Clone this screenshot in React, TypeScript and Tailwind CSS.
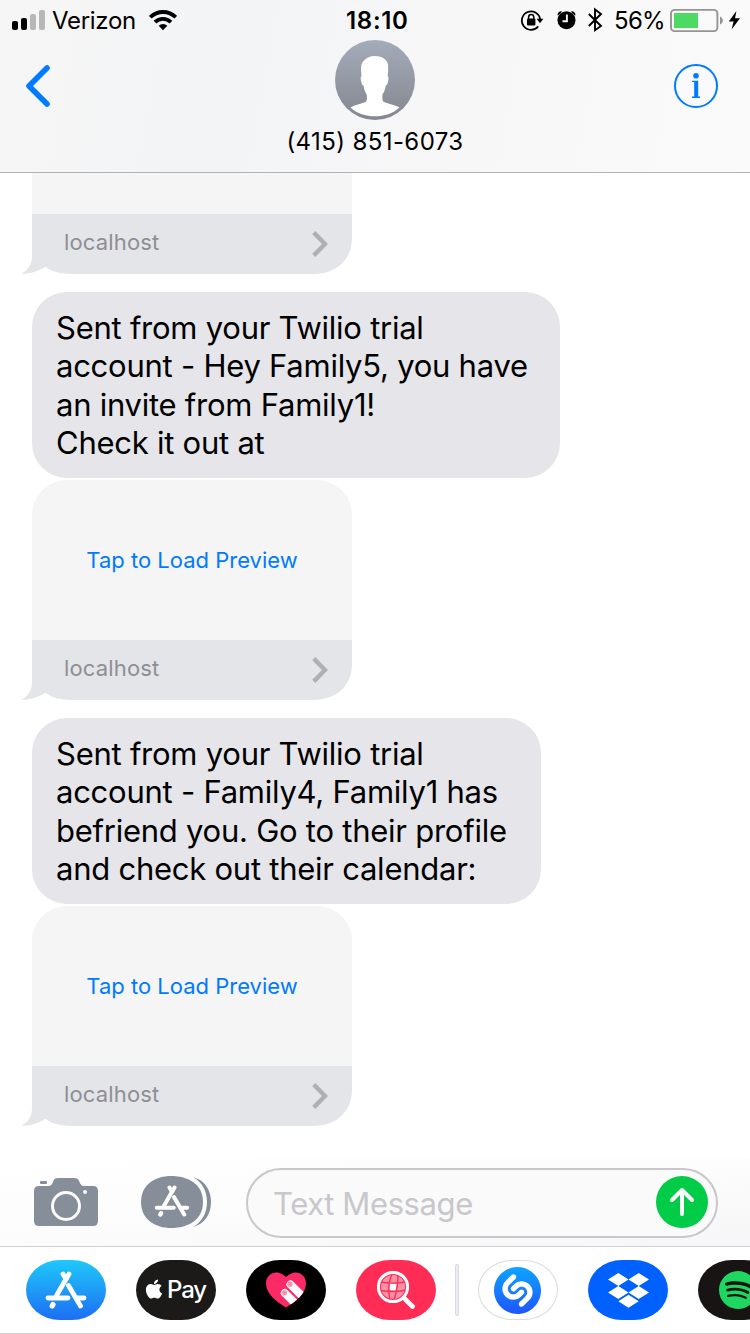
import React from "react";
import { SiShazam, SiSpotify } from "react-icons/si";
import { FaApple } from "react-icons/fa";

const inter = "font-['Inter','Liberation_Sans',sans-serif]";

function StatusBar() {
  return (
    <div className="flex h-10 items-center pl-3 text-black">
      <svg className="h-10 w-[34px] shrink-0" viewBox="0 0 34 40">
        <rect x="0" y="21" width="6" height="9" rx="2" />
        <rect x="9" y="18" width="6" height="12" rx="2" />
        <rect x="18" y="14" width="6" height="16" rx="2" fill="#b7b7b8" />
        <rect x="27" y="10" width="6" height="20" rx="2" fill="#b7b7b8" />
      </svg>
      <span className="ml-[6px] w-[97px] shrink-0 whitespace-nowrap pt-[2px] text-[24px] leading-10 tracking-[-0.3px]">Verizon</span>
      <svg className="h-10 w-7 shrink-0" viewBox="0 0 28 40">
        <g fill="none" stroke="#000" strokeWidth="3.9">
          <path d="M1.2 17.2A18.2 18.2 0 0 1 26.8 17.2" />
          <path d="M6 22.2A11.4 11.4 0 0 1 22 22.2" />
        </g>
        <path d="M14 30.2 9.7 25.8A6.2 6.2 0 0 1 18.3 25.8Z" />
      </svg>
      <span className="ml-[169px] w-[174px] shrink-0 whitespace-nowrap pt-[2px] text-[24px] font-semibold leading-10 tracking-[0.7px]">18:10</span>
      <svg className="h-10 w-[84px] shrink-0" viewBox="520 0 84 40">
        <path d="M538.2 26.4A9.2 9.2 0 1 1 540.2 19.5" fill="none" stroke="#000" strokeWidth="1.8" />
        <path d="M536.6 18.8H543.4L540 23.2Z" />
        <rect x="527" y="18.6" width="8.4" height="6.8" rx="1" />
        <path d="M528.6 19V17.2a2.6 2.6 0 0 1 5.2 0V19" fill="none" stroke="#000" strokeWidth="1.5" />
        <circle cx="566.5" cy="20.2" r="9" />
        <path d="M566.9 14.5V21.3H562.5" fill="none" stroke="#f8f8f8" strokeWidth="1.9" />
        <path d="M557.6 15.4a3.5 3.5 0 0 1 4.4-4l-1 1.3a12 12 0 0 0-2.6 2.6zM575.4 15.4a3.5 3.5 0 0 0-4.4-4l1 1.3a12 12 0 0 1 2.6 2.6z" />
        <path d="M588.8 14 601 26 595 30.2V9.4L601 14 588.8 26" fill="none" stroke="#000" strokeWidth="1.9" />
      </svg>
      <span className="ml-[10px] w-[56px] shrink-0 whitespace-nowrap pt-[2px] text-[24px] leading-10 tracking-[-0.7px]">56%</span>
      <svg className="h-10 w-[71px] shrink-0" viewBox="670 0 71 40">
        <rect x="671" y="9.900" width="46.400" height="21.200" rx="3.600" fill="none" stroke="#949494" strokeWidth="1.900" />
        <rect x="674" y="13" width="24" height="15" fill="#4cd964" />
        <path d="M720 16.500c3.800 1.600 3.800 6.400 0 8z" fill="#949494" />
        <path d="M736.400 11 728.800 21.400H733.600L731.600 29.400 740 18.200H735Z" />
      </svg>
    </div>
  );
}

function Avatar() {
  return (
    <svg className="size-20" viewBox="0 0 80 80">
      <defs>
        <linearGradient id="avatar" x1="0" y1="0" x2="0" y2="1">
          <stop offset="0" stopColor="#a4abb9" />
          <stop offset="1" stopColor="#848791" />
        </linearGradient>
      </defs>
      <circle cx="40" cy="40" r="40" fill="url(#avatar)" />
      <path
        fill="#fff"
        d="M39.5 16C35 16 31.500 18 29 20.500C26.500 22.500 26 26 26 30L26.500 36C25.300 36.500 25.500 39 26.300 42C26.800 44.500 27.500 45.500 28.500 45.500C29 49 30 52 31.700 54.500C32.300 58 32 61 30.500 62C26 64 20 64.500 15.300 67.500C22 73.500 31 76.300 40 76.300C49 76.300 58 73.500 64.500 67.500C59.500 64.500 53.500 64 49 62C47.300 61 47 58 47.500 54.500C49.200 52 50.200 49 50.800 45.500C51.800 45.500 52.500 44.500 53 42C53.600 39 53.900 36.500 52.700 36C53 32 53.400 28 53 25C52.500 20 48 16 39.500 16Z"
      />
    </svg>
  );
}

function Header() {
  return (
    <header className="h-[173px] shrink-0 border-b border-[#b2b2b2] bg-[linear-gradient(100deg,#f6f6f6_0%,#f3f4f6_30%,#f7f7f8_60%,#fafafa_100%)]">
      <StatusBar />
      <div className="grid grid-cols-[1fr_200px_1fr] pl-[24px] pr-[24px]">
        <svg className="mt-[24px] h-11 w-11" viewBox="0 0 44 44">
          <path d="M23 4 5 22 23 40" fill="none" stroke="#007aff" strokeWidth="5.600" strokeLinecap="round" strokeLinejoin="round" />
        </svg>
        <div className="flex flex-col items-center">
          <Avatar />
          <span className="mt-[6px] whitespace-nowrap text-[24px] leading-8 tracking-[0.4px]">(415) 851-6073</span>
        </div>
        <svg className="mr-2 mt-[24px] size-11 justify-self-end" viewBox="0 0 44 44">
          <circle cx="22" cy="22" r="21" fill="none" stroke="#007aff" strokeWidth="2" />
          <circle cx="22" cy="11.700" r="2.800" fill="#007aff" />
          <path d="M18 16.700H24.200V32.600H26V34H18V32.600H20.200V18.100H18Z" fill="#007aff" />
        </svg>
      </div>
    </header>
  );
}

function Bubble({ lines, width }: { lines: string[]; width: string }) {
  return (
    <div className={`h-[186px] shrink-0 rounded-[35px] bg-[#e5e5ea] pl-[24px] pt-[17px] ${width}`}>
      {lines.map((line) => (
        <p key={line} className="whitespace-nowrap text-[31px] leading-[38.3px] tracking-[-0.25px]">
          {line}
        </p>
      ))}
    </div>
  );
}

function LinkFooter() {
  return (
    <div className="relative flex h-[60px] w-80 shrink-0 items-center justify-between pl-8 pr-[24px]">
      <svg className="absolute left-[-12px] top-0 h-[60px] w-[332px]" viewBox="0 0 332 60">
        <path
          fill="#e4e5e9"
          d="M12 0V42C12 51 7.500 57 1.300 59.600C10 60.200 18.500 57 25.500 52.800C32 58 41 60 51 60H293C316 60 332 46 332 24V0Z"
        />
      </svg>
      <span className="relative mt-[-5px] text-[22px] leading-7 tracking-[0.15px] text-[#8e8e93]">localhost</span>
      <svg className="relative h-7 w-4" viewBox="0 0 16 28">
        <path d="M1.800 2.600 13 14 1.800 25.400" fill="none" stroke="#b0b0b3" strokeWidth="4.400" />
      </svg>
    </div>
  );
}

function LinkPreview() {
  return (
    <div className="mb-[18px] mt-[2px] shrink-0">
      <div className="flex h-40 w-80 items-center justify-center rounded-t-[35px] bg-[#f5f5f5] text-[22px] text-[#007aff]">
        Tap to Load Preview
      </div>
      <LinkFooter />
    </div>
  );
}

function StoreGlyph({ className }: { className: string }) {
  return (
    <svg className={className} viewBox="0 0 42 38" fill="none" stroke="#fff" strokeWidth="4.800" strokeLinecap="round">
      <path d="M24 3 11.800 24" />
      <path d="M18 3 21 8" />
      <path d="M23.500 14.500 35.500 35" />
      <path d="M3 27H23" />
      <path d="M32.500 27H39" />
      <path d="M8 33.500 7.200 35" strokeWidth="5.200" />
    </svg>
  );
}

function Composer() {
  return (
    <div className="flex h-[88px] shrink-0 items-start bg-[linear-gradient(175deg,#ffffff_0%,#fcfcfc_50%,#f6f6f8_100%)] pl-[34px]">
      <svg className="mt-[20px] h-12 w-16 shrink-0" viewBox="0 0 64 48" fill="#868e99">
        <path d="M5 8H14C17 8 18 6.500 19 4C20 1 21 0 24 0H40C43 0 44.500 1 45.500 4C46.500 6.500 47.500 8 50 8H59Q64 8 64 13V43Q64 48 59 48H5Q0 48 0 43V13Q0 8 5 8Z" />
        <rect x="6" y="3" width="7" height="3" rx="1" />
        <circle cx="32" cy="28" r="13.500" fill="none" stroke="#fcfcfc" strokeWidth="3" />
        <circle cx="51" cy="14" r="2" fill="#fcfcfc" />
      </svg>
      <div className="relative ml-[43px] mt-[18px] h-[52px] w-[70px] shrink-0">
        <svg className="size-full" viewBox="0 0 70 52" fill="#868e99">
          <path d="M30 0C47 0 62 8 62 26C62 44 47 52 30 52C15 52 0 44 0 26C0 8 15 0 30 0Z" />
          <path d="M52 1C63 4 70 13 70 26C70 39 63 48 52 51C61 46 66 37 66 26C66 15 61 6 52 1Z" />
        </svg>
        <StoreGlyph className="absolute left-[13px] top-[9px] h-8 w-9" />
      </div>
      <div className="ml-[35px] mt-[10px] flex h-[70px] w-[472px] items-center justify-between rounded-full border-2 border-[#c7c7cc] bg-[#fafafa] pl-[25px] pr-2">
        <span className="pt-[2px] text-[31px] leading-10 tracking-[-0.4px] text-[#c7c7cc]">Text Message</span>
        <svg className="mb-[2px] size-[52px]" viewBox="0 0 52 52">
          <circle cx="26" cy="26" r="26" fill="#00cc47" />
          <path d="M26 38V14.500M16 24 26 14 36 24" fill="none" stroke="#fff" strokeWidth="4" strokeLinecap="round" strokeLinejoin="round" />
        </svg>
      </div>
    </div>
  );
}

const pill = "flex h-[60px] w-20 shrink-0 items-center justify-center rounded-[34px/30px]";

function HeartTouch() {
  return (
    <svg className="h-9 w-10" viewBox="0 0 40 36">
      <defs>
        <clipPath id="heart">
          <path d="M20 35.500C11 30 0 22 0 11.500C0 4.500 5 .5 10 .5C14.500 .5 18 3 20 5C22 3 25.500 .5 30 .5C35 .5 40 4.500 40 11.500C40 22 29 30 20 35.500Z" />
        </clipPath>
      </defs>
      <g clipPath="url(#heart)">
        <rect width="40" height="36" fill="#fb2a67" />
        <path d="M24.500 12.500 44 32M18.800 21 36 38.200" stroke="#fff" strokeWidth="8" strokeLinecap="round" />
        <circle cx="24" cy="12.200" r="2.600" fill="#ff8ea8" />
        <circle cx="18.500" cy="20.800" r="2.600" fill="#ff8ea8" />
      </g>
    </svg>
  );
}

function GlobeSearch() {
  return (
    <svg className="h-[38px] w-[38px]" viewBox="0 0 38 38">
      <circle cx="16" cy="16" r="12.500" fill="#ff91a6" />
      <path d="M12.500 12.500 20 13 18.500 19.500 12 19Z" fill="#fff" />
      <g fill="none" stroke="#ff2d55" strokeWidth="1.400">
        <path d="M3 11C12 12.500 20 12.500 29 11M3 19.500C12 21 20 21 29 19M15 3C11 12 11 20 13 29M21 3C21 12 20 20 17 29" />
        <circle cx="16" cy="16" r="12.800" />
      </g>
      <circle cx="16" cy="16" r="14.600" fill="none" stroke="#fff" strokeWidth="3" />
      <path d="M27 27 35.500 35.500" stroke="#fff" strokeWidth="4.600" strokeLinecap="round" />
    </svg>
  );
}

function ShazamLogo() {
  return (
    <span className="mr-px flex size-[47px] items-center justify-center">
      <svg width="0" height="0" className="absolute">
        <defs>
          <linearGradient id="shazam" x1="0" y1="0" x2="0" y2="1">
            <stop offset="0" stopColor="#0da5ff" />
            <stop offset="1" stopColor="#1f55ff" />
          </linearGradient>
        </defs>
      </svg>
      <SiShazam size={47} fill="url(#shazam)" />
    </span>
  );
}

function DropboxLogo() {
  return (
    <svg className="h-[35px] w-[41px]" viewBox="0 0 41 35" fill="#fff">
      <path d="M10.300 0 20.500 6.500 10.300 13 0 6.500ZM30.700 0 41 6.500 30.700 13 20.500 6.500ZM10.300 13 20.500 19.500 10.300 26 0 19.500ZM30.700 13 41 19.500 30.700 26 20.500 19.500ZM20.500 21.700 30.700 28.200 20.500 34.700 10.300 28.200Z" />
    </svg>
  );
}

function AppStrip() {
  return (
    <div className="flex h-[88px] shrink-0 items-start overflow-hidden border-y border-[#cfcfd2] bg-white pl-[26px] pt-[13px]">
      <div className={`${pill} bg-[linear-gradient(#1fc8fb,#1d6ef2)]`}>
        <StoreGlyph className="h-[38px] w-[42px]" />
      </div>
      <div className={`${pill} ml-[30px] bg-[#1b1a19] pr-[3px] text-white`}>
        <FaApple size={22} className="mb-[3px] shrink-0" />
        <span className="ml-[2px] text-[24px] font-medium leading-8 tracking-[-1.200px]">Pay</span>
      </div>
      <div className={`${pill} ml-[30px] bg-black`}>
        <HeartTouch />
      </div>
      <div className={`${pill} ml-[30px] bg-[#ff2d55]`}>
        <GlobeSearch />
      </div>
      <div className="ml-[19px] mt-1 h-[52px] w-1 shrink-0 rounded-sm border border-[#d9d9e0] bg-[#ececf3]" />
      <div className={`${pill} ml-[19px] border border-[#dcdcdc] bg-white`}>
        <ShazamLogo />
      </div>
      <div className={`${pill} ml-[30px] bg-[#0061ff]`}>
        <DropboxLogo />
      </div>
      <div className={`${pill} ml-[30px] bg-[#191414]`}>
        <SiSpotify size={38} color="#1ed760" />
      </div>
    </div>
  );
}

export default function App() {
  return (
    <div className={`flex h-[1334px] w-[750px] flex-col overflow-hidden bg-white text-black ${inter}`}>
      <Header />
      <main className="flex h-[985px] shrink-0 flex-col items-start overflow-hidden pl-8">
        <div className="mb-[18px] shrink-0">
          <div className="h-[41px] w-80 bg-[#f5f5f5]" />
          <LinkFooter />
        </div>
        <Bubble
          width="w-[528px]"
          lines={["Sent from your Twilio trial", "account - Hey Family5, you have", "an invite from Family1!", "Check it out at"]}
        />
        <LinkPreview />
        <Bubble
          width="w-[509px]"
          lines={["Sent from your Twilio trial", "account - Family4, Family1 has", "befriend you. Go to their profile", "and check out their calendar:"]}
        />
        <LinkPreview />
      </main>
      <Composer />
      <AppStrip />
    </div>
  );
}
